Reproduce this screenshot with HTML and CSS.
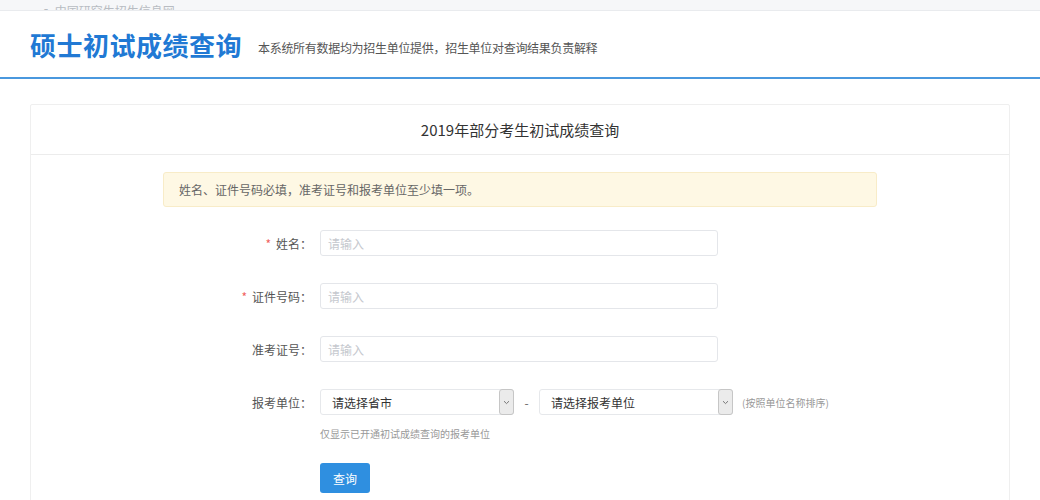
FILE: index.html
```html
<!DOCTYPE html>
<html lang="zh-CN">
<head>
<meta charset="utf-8">
<title>硕士初试成绩查询</title>
<link rel="stylesheet" href="styles.css">
</head>
<body>
<div class="topbar"><span class="topbar-text">▪ 中国研究生招生信息网</span></div>
<header class="header">
  <h1 class="title">硕士初试成绩查询</h1>
  <span class="subtitle">本系统所有数据均为招生单位提供，招生单位对查询结果负责解释</span>
</header>
<main class="card">
  <div class="card-head">2019年部分考生初试成绩查询</div>
  <div class="card-body">
    <div class="alert">姓名、证件号码必填，准考证号和报考单位至少填一项。</div>
    <form class="form">
      <div class="row">
        <label class="label"><span class="req">*</span>姓名：</label>
        <div class="input"><span class="ph">请输入</span></div>
      </div>
      <div class="row">
        <label class="label"><span class="req">*</span>证件号码：</label>
        <div class="input"><span class="ph">请输入</span></div>
      </div>
      <div class="row">
        <label class="label">准考证号：</label>
        <div class="input"><span class="ph">请输入</span></div>
      </div>
      <div class="row row-last">
        <label class="label">报考单位：</label>
        <div class="selects">
          <div class="select"><span class="sel-text">请选择省市</span><span class="arrow"><svg width="7" height="5" viewBox="0 0 7 5"><path d="M1 1.2 L3.5 3.6 L6 1.2" fill="none" stroke="#777" stroke-width="1"/></svg></span></div>
          <span class="dash">-</span>
          <div class="select"><span class="sel-text">请选择报考单位</span><span class="arrow"><svg width="7" height="5" viewBox="0 0 7 5"><path d="M1 1.2 L3.5 3.6 L6 1.2" fill="none" stroke="#777" stroke-width="1"/></svg></span></div>
          <span class="note">(按照单位名称排序)</span>
        </div>
      </div>
      <div class="hint">仅显示已开通初试成绩查询的报考单位</div>
      <div class="actions"><button type="button" class="btn">查询</button></div>
    </form>
  </div>
</main>
</body>
</html>
```

FILE: styles.css
```css
* { box-sizing: border-box; }
html, body { margin: 0; padding: 0; background: #fff; }
body {
  font-family: "Noto Sans CJK SC", "Microsoft YaHei", "Noto Sans", sans-serif;
  color: #333;
  overflow: hidden;
  height: 500px;
}
.topbar {
  height: 11px;
  background: #f6f7f9;
  border-bottom: 1px solid #e9ebee;
  overflow: hidden;
  display: flex;
  align-items: flex-end;
  padding-left: 40px;
}
.topbar-text {
  font-size: 12px;
  line-height: 12px;
  color: #b8bcc2;
  margin-bottom: -7px;
}
.header {
  height: 68px;
  display: flex;
  align-items: center;
  padding-left: 30px;
  border-bottom: 2px solid #4a98de;
}
.title {
  margin: 0;
  font-size: 26px;
  letter-spacing: 0.5px;
  font-weight: 700;
  color: #2179d4;
  line-height: 1;
  padding-top: 2px;
}
.subtitle {
  margin-left: 16px;
  font-size: 12px;
  color: #555;
  letter-spacing: -0.3px;
  padding-top: 6px;
}
.card {
  margin: 25px 30px 0;
  border: 1px solid #efefef;
  border-radius: 2px;
}
.card-head {
  height: 50px;
  display: flex;
  align-items: center;
  justify-content: center;
  font-size: 15px;
  color: #333;
  border-bottom: 1px solid #ececec;
}
.card-body {
  padding: 17px 0 40px;
}
.alert {
  width: 714px;
  margin-left: 132px;
  height: 35px;
  display: flex;
  align-items: center;
  padding-left: 15px;
  background: #fef8e4;
  border: 1px solid #f8ecc8;
  border-radius: 3px;
  font-size: 12px;
  color: #666;
}
.form {
  margin-top: 23px;
  padding-left: 281px;
}
.row {
  display: flex;
  align-items: center;
  height: 26px;
  margin-bottom: 27px;
}
.row-last { margin-bottom: 0; }
.label {
  width: 0;
  flex: none;
  display: flex;
  justify-content: flex-end;
  white-space: nowrap;
  font-size: 12px;
  color: #555;
  margin-right: 8px;
}
.req {
  color: #f0625f;
  margin-right: 5px;
  font-size: 12px;
}
.input {
  width: 398px;
  height: 26px;
  border: 1px solid #e4e6ea;
  border-radius: 3px;
  display: flex;
  align-items: center;
  padding-left: 7px;
}
.ph {
  font-size: 12px;
  color: #c5c8ce;
}
.selects {
  display: flex;
  align-items: center;
}
.select {
  width: 194px;
  height: 26px;
  border: 1px solid #e6e8eb;
  border-radius: 3px;
  display: flex;
  align-items: center;
  justify-content: space-between;
  padding-left: 11px;
}
.sel-text {
  font-size: 12px;
  color: #333;
}
.arrow {
  width: 15px;
  height: 26px;
  margin: -1px -1px -1px 0;
  background: #ebebeb;
  border: 1px solid #c6c6c6;
  border-radius: 3px;
  display: flex;
  align-items: center;
  justify-content: center;
}
.dash {
  width: 25px;
  text-align: center;
  font-size: 12px;
  color: #666;
}
.note {
  margin-left: 9px;
  font-size: 10px;
  color: #999;
}
.hint {
  margin: 12px 0 0 8px;
  font-size: 10px;
  color: #999;
  line-height: 14px;
}
.actions {
  margin: 22px 0 0 8px;
}
.btn {
  width: 50px;
  height: 30px;
  background: #2f8fe0;
  border: none;
  border-radius: 3px;
  color: #fff;
  font-size: 12px;
  font-family: inherit;
  padding: 0;
}
```
